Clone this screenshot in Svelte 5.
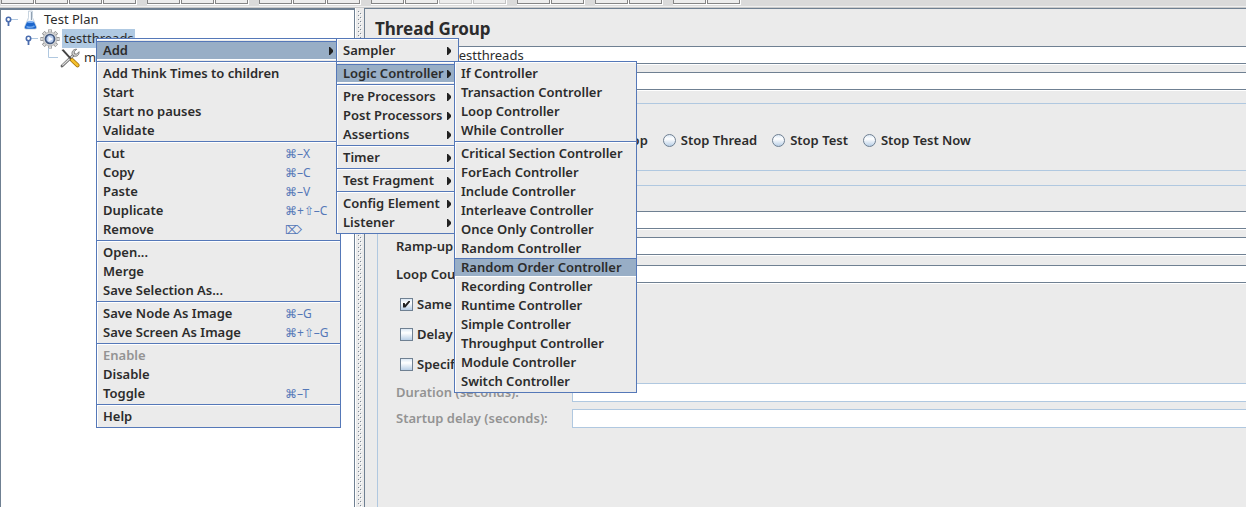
<script>
  const toolbar = [
    [1, 1, 1, 1],
    [1, 1, 1],
    [1, 1, 1],
    [1, 1, 0, 0],
    [1, 1],
    [1, 1],
    [1, 1],
  ];

  const contextMenu = [
    [{ label: 'Add', sub: true, active: true }],
    [{ label: 'Add Think Times to children' }, { label: 'Start' }, { label: 'Start no pauses' }, { label: 'Validate' }],
    [
      { label: 'Cut', key: '⌘–X' },
      { label: 'Copy', key: '⌘–C' },
      { label: 'Paste', key: '⌘–V' },
      { label: 'Duplicate', key: '⌘+⇧–C' },
      { label: 'Remove', key: '⌦' },
    ],
    [{ label: 'Open...' }, { label: 'Merge' }, { label: 'Save Selection As...' }],
    [{ label: 'Save Node As Image', key: '⌘–G' }, { label: 'Save Screen As Image', key: '⌘+⇧–G' }],
    [{ label: 'Enable', disabled: true }, { label: 'Disable' }, { label: 'Toggle', key: '⌘–T' }],
    [{ label: 'Help' }],
  ];

  const addMenu = [
    [{ label: 'Sampler', sub: true }],
    [{ label: 'Logic Controller', sub: true, active: true }],
    [
      { label: 'Pre Processors', sub: true },
      { label: 'Post Processors', sub: true },
      { label: 'Assertions', sub: true },
    ],
    [{ label: 'Timer', sub: true }],
    [{ label: 'Test Fragment', sub: true }],
    [{ label: 'Config Element', sub: true }, { label: 'Listener', sub: true }],
  ];

  const logicMenu = [
    ['If', 'Transaction', 'Loop', 'While'],
    ['Critical Section', 'ForEach', 'Include', 'Interleave', 'Once Only', 'Random', 'Random Order',
      'Recording', 'Runtime', 'Simple', 'Throughput', 'Module', 'Switch'],
  ].map((group) => group.map((name) => ({ label: name + ' Controller', active: name === 'Random Order' })));

  const errorActions = ['Continue', 'Start Next Thread Loop', 'Stop Thread', 'Stop Test', 'Stop Test Now'];
</script>

{#snippet menu(groups, name)}
  <div class="menu {name}" role="menu">
    {#each groups as group, g}
      {#if g > 0}<div class="sep" role="separator"></div>{/if}
      {#each group as item}
        <button class="item" class:active={item.active} role="menuitem" disabled={item.disabled}>
          <span class="label">{item.label}</span>
          {#if item.key}<span class="key">{item.key}</span>{/if}
          {#if item.sub}
            <svg class="arrow" width="4" height="8" viewBox="0 0 4 8"><path d="M0 0h1l3 3v2L1 8H0z" /></svg>
          {/if}
        </button>
      {/each}
    {/each}
  </div>
{/snippet}

{#snippet handle()}
  <svg class="handle" width="14" height="19" viewBox="0 0 14 19">
    <path d="M6 9.500H14" stroke="#b0c8e0" />
    <path d="M4.500 11v5" stroke="#4a6cae" stroke-width="1.800" />
    <circle cx="4.500" cy="9.500" r="2.200" fill="#fff" stroke="#4a6cae" stroke-width="1.600" />
  </svg>
{/snippet}

<div class="app">
  <div class="toolbar">
    {#each toolbar as group}
      <div class="tools">
        {#each group as enabled}
          <button class="tool" disabled={!enabled} aria-label="Tool"></button>
        {/each}
      </div>
    {/each}
  </div>

  <div class="main">
    <div class="tree">
      <div class="node">
        {@render handle()}
        <svg class="icon" width="20" height="20" viewBox="0 0 20 20">
          <path d="M8.500 1v6.500L4.500 17q-.5 2 1.500 2h9q2 0 1.500-2L12.500 7.500V1z" fill="#e8eff7" stroke="#bccad8" stroke-width=".8" />
          <path d="M7 12h7l2.200 5q.3 1.700-1.200 1.700H6Q4.500 18.700 4.800 17z" fill="#1c66cc" />
          <ellipse cx="10.500" cy="12" rx="3.400" ry="1" fill="#75aaf0" />
          <path d="M6.500 16.500q4 1.800 8-.5" stroke="#68a3ee" fill="none" stroke-width="1.500" />
          <path d="M11.500 2v8" stroke="#93a2b2" />
          <path d="M9.500 2v8" stroke="#fff" />
        </svg>
        <span class="text">Test Plan</span>
      </div>
      <div class="node second">
        {@render handle()}
        <svg class="icon" width="20" height="20" viewBox="0 0 20 20">
          <g stroke="#858585" stroke-width="3.800">
            <path d="M10 .5v19M.5 10h19M3.300 3.300l13.400 13.400M16.700 3.300L3.300 16.700" />
          </g>
          <g stroke="#dcdcdc" stroke-width="2.600">
            <path d="M10 1v18M1 10h18M3.700 3.700l12.600 12.600M16.300 3.700L3.700 16.300" />
          </g>
          <circle cx="10" cy="10" r="7" fill="#d4d4d4" stroke="#a5a5a5" stroke-width=".6" />
          <circle cx="10" cy="10" r="4.500" fill="#b9cef0" stroke="#42587f" stroke-width="1.700" />
          <path d="M8.500 7.300l4.500 2.700-4.500 2.700z" fill="#f7faff" />
        </svg>
        <span class="text selected">testthreads</span>
      </div>
      <div class="node third">
        <svg class="handle" width="14" height="19" viewBox="0 0 14 19"><path d="M4.500 0v9.500H14" stroke="#b0c8e0" fill="none" /></svg>
        <svg class="icon" width="20" height="20" viewBox="0 0 20 20">
          <path d="M2 18L13.500 7" stroke="#666" stroke-width="2.800" stroke-linecap="round" />
          <path d="M2.300 17.500L13.500 7" stroke="#ddd" stroke-width="1.200" />
          <path d="M16.700 1.300l-2.500 2.200.3 2.300 2.200.3 2.300-2.400c.4 3-1.800 5.100-4.700 4.500L12 6.500C11.500 3.500 13.500.9 16.700 1.300z" fill="#d0d0d0" stroke="#666" stroke-width=".8" />
          <path d="M1.500 2l2-.8 8.500 9.500-1.300 1.300z" fill="#444" />
          <path d="M12 12l5.500 5.300" stroke="#9c6c09" stroke-width="4" stroke-linecap="round" />
          <path d="M12 12l5.500 5.300" stroke="#f5c02c" stroke-width="2.600" stroke-linecap="round" />
        </svg>
        <span class="text">my test</span>
      </div>
    </div>

    <div class="splitter"></div>

    <div class="panel">
      <h1>Thread Group</h1>
      <div class="row head"><label for="name">Name:</label><input id="name" type="text" value="testthreads" /></div>
      <div class="row head"><label for="comments">Comments:</label><input id="comments" type="text" /></div>

      <fieldset class="actions">
        <legend>Action to be taken after a Sampler error</legend>
        {#each errorActions as action, i}
          <label class="choice"><input type="radio" name="error" checked={i === 0} />{action}</label>
        {/each}
      </fieldset>

      <fieldset class="properties">
        <legend>Thread Properties</legend>
        <div class="row"><label for="users">Number of Threads (users):</label><input id="users" type="text" /></div>
        <div class="row"><label for="ramp">Ramp-up Period (seconds):</label><input id="ramp" type="text" /></div>
        <div class="row loops"><label for="loops">Loop Count:</label><input id="loops" type="text" /></div>
        <div class="checks">
          <label class="choice"><input type="checkbox" checked />Same user on each iteration</label>
          <label class="choice"><input type="checkbox" />Delay Thread creation</label>
          <label class="choice"><input type="checkbox" />Specify Thread lifetime</label>
        </div>
        <div class="row off"><label for="duration">Duration (seconds):</label><input id="duration" type="text" disabled /></div>
        <div class="row off"><label for="delay">Startup delay (seconds):</label><input id="delay" type="text" disabled /></div>
      </fieldset>
    </div>
  </div>

  {@render menu(contextMenu, 'context')}
  {@render menu(addMenu, 'add')}
  {@render menu(logicMenu, 'logic')}
</div>

<style>
  :global(body) {
    margin: 0;
  }
  .app {
    --line: #6f8092;
    --soft: #b0c8e0;
    --blue: #5578b8;
    --face: #ebebeb;
    position: relative;
    display: flex;
    flex-direction: column;
    height: 100vh;
    overflow: hidden;
    background: var(--face);
    color: #2c2c2c;
    font: 600 13px/19px "Noto Sans", "Open Sans", sans-serif;
  }
  button,
  input {
    box-sizing: border-box;
    margin: 0;
    font: inherit;
    color: inherit;
  }

  .toolbar {
    display: flex;
    gap: 10px;
    height: 6px;
    padding-left: 1px;
    background: #dadada;
    border-bottom: 1px solid #efefef;
    box-shadow: 0 1px #cacaca;
    margin-bottom: 1px;
    flex: none;
  }
  .tools {
    display: flex;
    gap: 1px;
    padding-right: 1px;
    height: 5px;
    background: #fff;
  }
  .tool {
    width: 33px;
    height: 4px;
    padding: 0;
    background: #ededed;
    border: 1px solid #858585;
    border-top: 0;
  }
  .tool:disabled {
    border-color: #c4c4c4;
  }

  .main {
    display: flex;
    flex: 1;
    min-height: 0;
  }
  .tree {
    box-sizing: border-box;
    width: 355px;
    flex: none;
    background: #fff;
    border: 1px solid var(--line);
    border-top-width: 2px;
    border-bottom: 0;
    font-weight: 400;
  }
  .node {
    display: flex;
    align-items: center;
    height: 19px;
    padding-left: 3px;
  }
  .second {
    padding-left: 23px;
  }
  .third {
    padding-left: 43px;
  }
  .handle {
    flex: none;
  }
  .icon {
    flex: none;
    margin-left: 2px;
  }
  .node .text {
    margin-left: 2px;
    padding: 0 1px 0 2px;
  }
  .selected {
    background: #afc9e2;
  }

  .splitter {
    width: 9px;
    flex: none;
    background: var(--face);
    position: relative;
    border-left: 1px solid #fff;
    box-sizing: border-box;
  }
  .splitter::before {
    content: "";
    position: absolute;
    inset: 3px 1px 0 2px;
    background:
      conic-gradient(from 270deg at 1px 1px, #7b8794 90deg, transparent 0) 0 0 / 6px 4px,
      conic-gradient(from 270deg at 1px 1px, #7b8794 90deg, transparent 0) 2px 2px / 6px 4px,
      conic-gradient(from 270deg at 1px 1px, #fff 90deg, transparent 0) 1px 1px / 6px 4px,
      conic-gradient(from 270deg at 1px 1px, #fff 90deg, transparent 0) 3px 3px / 6px 4px;
  }

  .panel {
    flex: 1;
    min-width: 0;
    display: flex;
    flex-direction: column;
    padding-left: 10px;
    border-top: 1px solid var(--line);
    border-left: 1px solid var(--line);
  }
  h1 {
    margin: 0;
    padding: 8px 0 5px;
    font-size: 17px;
    line-height: 24px;
  }
  .row {
    display: flex;
    height: 19px;
    gap: 6px;
    margin-bottom: 7px;
    white-space: nowrap;
  }
  .head label {
    width: 69px;
  }
  .row input {
    flex: 1;
    min-width: 0;
    height: 18px;
    padding: 0 3px;
    border: 1px solid var(--line);
    border-right: 0;
    box-shadow: 0 1px #fff;
    background: #fff;
    font-weight: 400;
  }
  .off {
    color: #939393;
  }
  .off label {
    width: 170px;
  }
  .row.off input {
    height: 19px;
    border-color: var(--soft);
    box-shadow: none;
  }

  fieldset {
    min-width: 0;
    margin: 0 0 0 2px;
    padding: 0 0 0 18px;
    border: 1px solid var(--soft);
    border-right: 0;
  }
  legend {
    margin-left: -12px;
    padding: 0 2px;
    line-height: 16px;
    font-weight: 400;
  }
  .actions {
    display: flex;
    gap: 15px;
    height: 76px;
    box-sizing: border-box;
    margin-top: -3px;
    padding: 20px 0 0 14px;
    white-space: nowrap;
  }
  .properties {
    flex: 1;
    margin-top: 6px;
    padding-top: 18px;
    border-bottom: 0;
  }
  .loops {
    margin: 9px 0 5px;
  }
  .choice {
    display: flex;
    align-items: center;
    gap: 5px;
  }
  .checks {
    padding: 0 0 4px 4px;
  }
  .checks .choice {
    height: 30px;
    gap: 4px;
  }
  .choice input {
    appearance: none;
    width: 13px;
    height: 13px;
    border: 1px solid var(--line);
    background: linear-gradient(#dce8f4, #fff 35%, #b9cfe6);
  }
  .choice input[type="radio"] {
    border-radius: 50%;
  }
  .choice input[type="checkbox"]:checked::before {
    content: "";
    display: block;
    width: 7px;
    height: 7px;
    margin: 2px;
    background: #222;
    clip-path: polygon(0 35%, 25% 35%, 30% 60%, 85% 0, 100% 0, 100% 20%, 35% 100%, 0 100%);
  }

  .menu {
    position: absolute;
    box-sizing: border-box;
    display: flex;
    flex-direction: column;
    padding: 2px 0 1px;
    background: var(--face);
    border: 1px solid var(--blue);
    box-shadow: inset 1px 1px #fff;
  }
  .context {
    left: 96px;
    top: 38px;
    width: 245px;
  }
  .add {
    left: 336px;
    top: 38px;
    width: 123px;
  }
  .logic {
    left: 454px;
    top: 61px;
    width: 183px;
  }
  .item {
    display: flex;
    align-items: center;
    height: 19px;
    padding: 0 7px 0 6px;
    border: 0;
    background: none;
    text-align: left;
    white-space: nowrap;
  }
  .label {
    flex: 1;
  }
  .item:disabled {
    color: #939393;
  }
  .active {
    background: #98aec6;
    border-top: 1px solid var(--blue);
    border-bottom: 1px solid #fff;
  }
  .key {
    width: 48px;
    font-size: 12px;
    font-weight: 400;
    color: #5578b8;
  }
  .arrow {
    flex: none;
    fill: #222;
  }
  .sep {
    height: 1px;
    margin: 1px 0;
    background: var(--blue);
    border-bottom: 1px solid #fff;
  }
</style>
